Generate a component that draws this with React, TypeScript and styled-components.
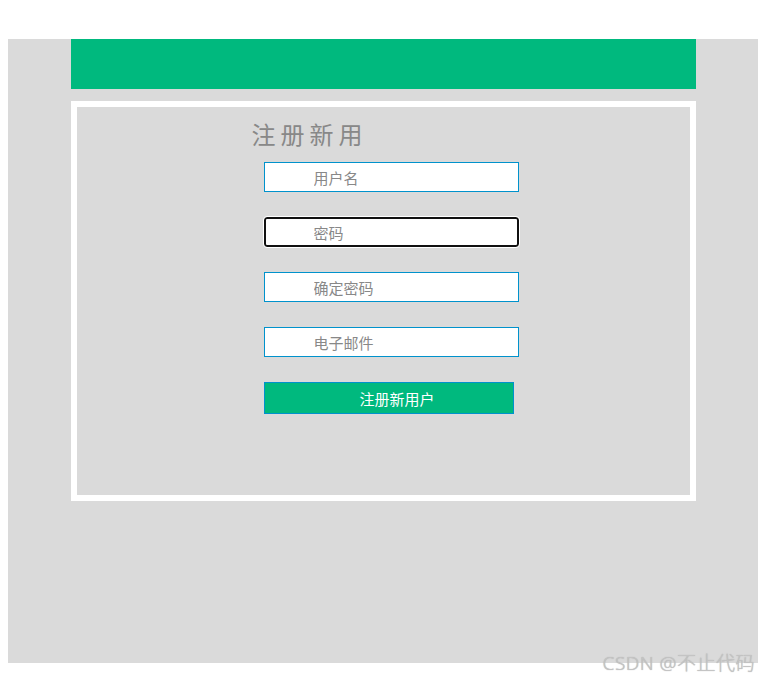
import styled, { createGlobalStyle } from 'styled-components';

const GlobalStyle = createGlobalStyle`
body {
	margin: 8px;
	font-family: "Liberation Sans", "Noto Sans CJK SC", sans-serif;
	background: #fff;
}
`;

const Page = styled.div`
position: relative;
height: 667px;
overflow: hidden;
`;
const Stage = styled.div`
margin-top: 31px;
width: 750px;
height: 624px;
background-color: #dadada;
`;
const Header = styled.div`
width: 625px;
height: 50px;
margin: 0 auto;
background-color: #00b97e;
`;
const FormBox = styled.div`
box-sizing: border-box;
width: 625px;
height: 400px;
margin: 12px auto 0;
border: 6px solid #fff;
padding: 10px 0 0 175px;
`;
const Title = styled.h2`
margin: 0 0 11px;
font-family: "Noto Sans CJK SC", sans-serif;
font-size: 24px;
font-weight: 400;
line-height: 34px;
letter-spacing: 5px;
color: #888;
`;
const Fields = styled.div`
display: flex;
flex-direction: column;
gap: 25px;
padding-left: 12px;
`;
const Field = styled.input<{ $active?: boolean }>`
box-sizing: border-box;
width: 255px;
height: 30px;
padding: 0 0 0 ${p => (p.$active ? 48 : 49)}px;
border: ${p => (p.$active ? '2px solid #111' : '1px solid #0092cc')};
border-radius: ${p => (p.$active ? '3px' : '0')};
outline: ${p => (p.$active ? '1px solid #fff' : 'none')};
background: #fff;
font-family: "Noto Sans CJK SC", sans-serif;
font-size: 15px;
color: #888;
&::placeholder {
	color: #888;
}
`;
const Submit = styled.button`
box-sizing: border-box;
width: 250px;
height: 32px;
padding: 0 0 0 17px;
border: 1px solid #0092cc;
background-color: #00b97e;
font-family: "Noto Sans CJK SC", sans-serif;
font-size: 15px;
color: #fff;
`;
const Watermark = styled.span`
position: absolute;
right: 6px;
bottom: 1px;
font-family: "Noto Sans", "Noto Sans CJK SC", sans-serif;
font-size: 19px;
font-weight: 300;
letter-spacing: 0.5px;
line-height: 22px;
color: #c4c4c4;
text-shadow: 0 0 1px #a8a8a8;
`;

export default function App() {
	return (
		<Page>
			<GlobalStyle />
			<Stage>
				<Header />
				<FormBox>
					<Title>注册新用</Title>
					<Fields>
						<Field type='text' placeholder='用户名' />
						<Field type='password' placeholder='密码' $active />
						<Field type='password' placeholder='确定密码' />
						<Field type='email' placeholder='电子邮件' />
						<Submit>注册新用户</Submit>
					</Fields>
				</FormBox>
			</Stage>
			<Watermark>CSDN @不止代码</Watermark>
		</Page>
	);
}
